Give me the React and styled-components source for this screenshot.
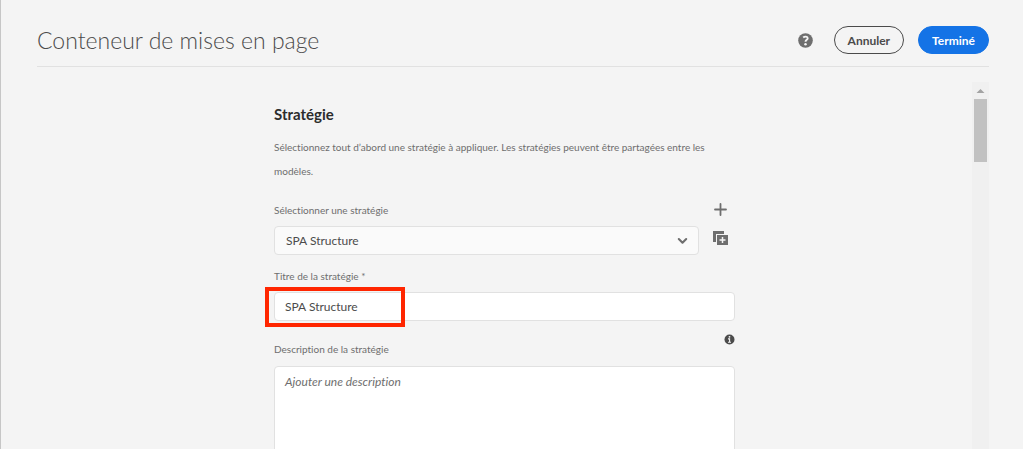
import React from "react";
import styled, { createGlobalStyle } from "styled-components";

const GlobalStyle = createGlobalStyle`
  *, *::before, *::after { box-sizing: border-box; }
  body {
    margin: 0;
    background: #f4f4f4;
    color: #4b4b4b;
    font-family: Lato, "Open Sans", sans-serif;
    font-size: 12px;
    font-variant-ligatures: none;
  }
  button, input, select, textarea { font: inherit; color: inherit; }
`;

const Page = styled.main`
  display: flex;
  flex-direction: column;
  height: 100vh;
  padding: 0 34px 0 36px;
  border-left: 1px solid #c6c6c6;
  overflow: hidden;
`;

const Header = styled.header`
  display: flex;
  flex: none;
  align-items: center;
  justify-content: space-between;
  padding: 26px 0 12px;
  border-bottom: 1px solid #e1e1e1;
`;

const Title = styled.h1`
  margin: 0;
  font-size: 23px;
  font-weight: 300;
  line-height: 28px;
`;

const Actions = styled.div`
  display: flex;
  align-items: center;
  gap: 14px;
`;

const IconButton = styled.button`
  display: flex;
  padding: 0;
  border: 0;
  background: none;
  color: #6e6e6e;
`;

const HelpButton = styled(IconButton)`
  margin-right: 7px;
`;

const PillButton = styled.button`
  height: 28px;
  padding: 0 13px;
  border: 1px solid ${(p) => (p.$primary ? "#1473e6" : "#4b4b4b")};
  border-radius: 14px;
  background: ${(p) => (p.$primary ? "#1473e6" : "transparent")};
  color: ${(p) => (p.$primary ? "#fff" : "#4b4b4b")};
  font-weight: 700;
`;

const Body = styled.div`
  display: flex;
  flex: 1;
  min-height: 0;
  margin-top: 15px;
`;

const Content = styled.div`
  flex: 1;
  padding-top: 20px;
  overflow: hidden;
`;

const Form = styled.form`
  max-width: 461px;
  margin: 0 auto;
`;

const Heading = styled.h2`
  margin: 0;
  color: #2c2c2c;
  font-size: 15px;
  font-weight: 700;
  line-height: 24px;
`;

const Intro = styled.p`
  margin: 9px 0 19px;
  color: #6e6e6e;
  font-size: 10px;
  line-height: 24px;
`;

const PolicyRow = styled.div`
  display: grid;
  grid-template-columns: 1fr 22px;
  gap: 14px;
`;

const PolicyTools = styled.div`
  display: flex;
  flex-direction: column;
  gap: 14px;
`;

const Field = styled.div`
  position: relative;
  display: flex;
  flex-direction: column;
  gap: 8px;
`;

const SpacedField = styled(Field)`
  margin-top: 13px;
`;

const Label = styled.label`
  color: #6e6e6e;
  font-size: 10px;
  line-height: 16px;
`;

const LabelRow = styled.div`
  display: flex;
  justify-content: space-between;
  height: 24px;
  color: #4b4b4b;

  ${Label} { padding-top: 7px; }
`;

const SelectBox = styled.div`
  display: grid;
  align-items: center;

  > * { grid-area: 1 / 1; }
  > svg { justify-self: end; margin-right: 11px; pointer-events: none; }
`;

const Select = styled.select`
  width: 100%;
  height: 29px;
  padding: 0 30px 0 11px;
  border: 1px solid #e1e1e1;
  border-radius: 4px;
  background: #fafafa;
  appearance: none;
`;

const Input = styled.input`
  width: 100%;
  height: 29px;
  padding: 0 10px;
  border: 1px solid #e1e1e1;
  border-radius: 4px;
  background: #fff;
`;

const TextArea = styled.textarea`
  display: block;
  width: 100%;
  height: 110px;
  padding: 7px 10px;
  border: 1px solid #e1e1e1;
  border-radius: 4px;
  background: #fff;
  line-height: 16px;
  resize: none;

  &::placeholder { color: #6e6e6e; font-style: italic; opacity: 1; }
`;

const Highlight = styled.div`
  position: absolute;
  bottom: -6px;
  left: -9px;
  width: 140px;
  height: 40px;
  border: 4px solid #ff2600;
  pointer-events: none;
`;

const ScrollTrack = styled.div`
  display: flex;
  flex: none;
  flex-direction: column;
  align-items: center;
  width: 17px;
  background: #f0f0f0;
`;

const ScrollThumb = styled.div`
  width: 13px;
  height: 63px;
  background: #c1c1c1;
`;

const HelpIcon = () => (
  <svg width="15" height="15" viewBox="0 0 15 15" aria-hidden="true">
    <circle cx="7.5" cy="7.5" r="7.3" fill="currentColor" />
    <path d="M5.2 4.5C6.5 3.3 9.7 3.1 9.7 5.2C9.7 6.9 7.6 6.8 7.5 8.8" fill="none" stroke="#f4f4f4" strokeWidth="1.9" />
    <circle cx="7.5" cy="11.2" r="1.25" fill="#f4f4f4" />
  </svg>
);

const AddIcon = () => (
  <svg width="15" height="15" viewBox="0 0 15 15" aria-hidden="true">
    <path d="M7.5 2v11M2 7.5h11" stroke="currentColor" strokeWidth="1.8" strokeLinecap="round" />
  </svg>
);

const DuplicateIcon = () => (
  <svg width="15" height="15" viewBox="0 0 15 15" aria-hidden="true">
    <path d="M0 0h11v3H3v8H0z" fill="currentColor" />
    <path d="M4 4h11v10H4z" fill="currentColor" />
    <path d="M9.5 6v6M6.5 9h6" stroke="#f4f4f4" strokeWidth="1.5" />
  </svg>
);

const ChevronIcon = () => (
  <svg width="11" height="8" viewBox="0 0 11 8" aria-hidden="true">
    <path d="M1.8 2l3.7 3.7L9.2 2" fill="none" stroke="#6e6e6e" strokeWidth="2.1" strokeLinecap="round" strokeLinejoin="round" />
  </svg>
);

const InfoIcon = () => (
  <svg width="11" height="11" viewBox="0 0 11 11" aria-hidden="true">
    <circle cx="5.5" cy="5.5" r="5" fill="#4b4b4b" />
    <circle cx="5.5" cy="2.8" r="0.9" fill="#f4f4f4" />
    <path d="M4 4.9h1.6v3.3M4 8.3h3" fill="none" stroke="#f4f4f4" strokeWidth="1.1" />
  </svg>
);

const ScrollUpIcon = () => (
  <svg width="17" height="17" viewBox="0 0 17 17" aria-hidden="true">
    <path d="M8.5 7L12.5 11H4.5z" fill="#a3a3a3" />
  </svg>
);

export default function App() {
  return (
    <>
      <GlobalStyle />
      <Page>
        <Header>
          <Title>Conteneur de mises en page</Title>
          <Actions>
            <HelpButton type="button" aria-label="Aide"><HelpIcon /></HelpButton>
            <PillButton type="button">Annuler</PillButton>
            <PillButton type="submit" form="policy" $primary>Terminé</PillButton>
          </Actions>
        </Header>
        <Body>
          <Content>
            <Form id="policy" onSubmit={(e) => e.preventDefault()}>
              <Heading>Stratégie</Heading>
              <Intro>
                Sélectionnez tout d’abord une stratégie à appliquer. Les stratégies peuvent être partagées entre les modèles.
              </Intro>
              <PolicyRow>
                <Field>
                  <Label htmlFor="policy-select">Sélectionner une stratégie</Label>
                  <SelectBox>
                    <Select id="policy-select" defaultValue="spa">
                      <option value="spa">SPA Structure</option>
                    </Select>
                    <ChevronIcon />
                  </SelectBox>
                </Field>
                <PolicyTools>
                  <IconButton type="button" aria-label="Ajouter"><AddIcon /></IconButton>
                  <IconButton type="button" aria-label="Dupliquer"><DuplicateIcon /></IconButton>
                </PolicyTools>
              </PolicyRow>
              <SpacedField>
                <Label htmlFor="policy-title">Titre de la stratégie *</Label>
                <Input id="policy-title" required defaultValue="SPA Structure" />
                <Highlight />
              </SpacedField>
              <SpacedField>
                <LabelRow>
                  <Label htmlFor="policy-description">Description de la stratégie</Label>
                  <InfoIcon />
                </LabelRow>
                <TextArea id="policy-description" placeholder="Ajouter une description" />
              </SpacedField>
            </Form>
          </Content>
          <ScrollTrack aria-hidden="true">
            <ScrollUpIcon />
            <ScrollThumb />
          </ScrollTrack>
        </Body>
      </Page>
    </>
  );
}
